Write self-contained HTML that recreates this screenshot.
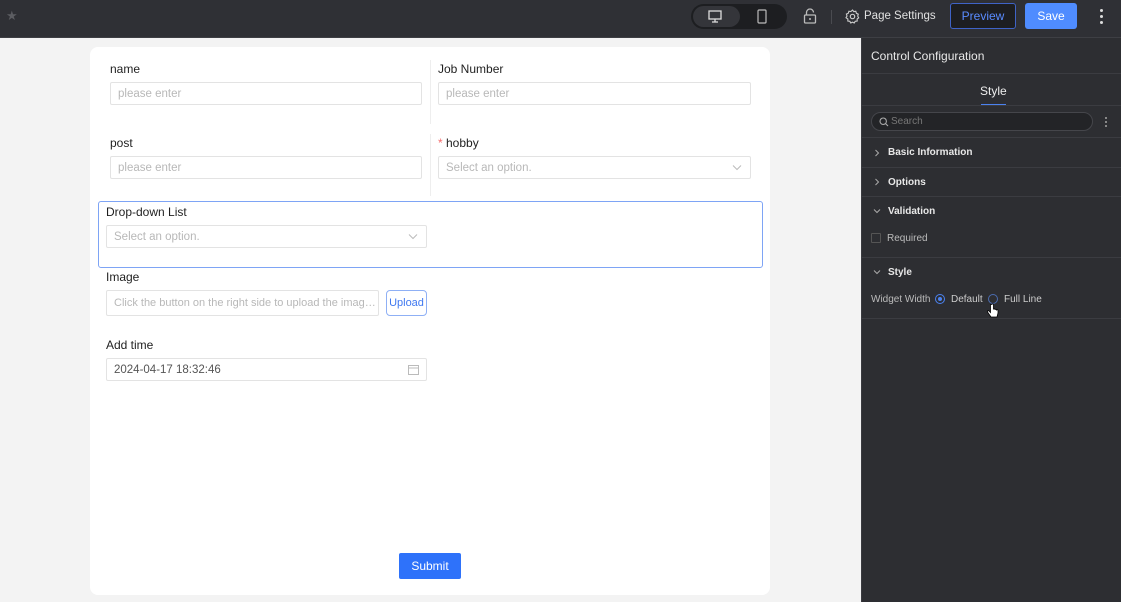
<!DOCTYPE html>
<html><head><meta charset="utf-8"><style>
*{box-sizing:border-box;margin:0;padding:0}
body{width:1121px;height:602px;overflow:hidden;background:#f3f3f3;font-family:"Liberation Sans",sans-serif;position:relative}
.a{position:absolute}
.top{left:0;top:0;width:1121px;height:38px;background:#2f3035;border-bottom:1px solid #3e3f44}
.card{left:90px;top:47px;width:680px;height:548px;background:#fff;border-radius:8px}
.lbl{font-size:12px;color:#1f1f1f}
.inp{height:23px;border:1px solid #e3e3e3;border-radius:2px;font-size:11.5px;color:#b8b8b8;padding-left:7px;padding-top:2px;line-height:19px;white-space:nowrap;overflow:hidden}
.panel{left:861px;top:38px;width:260px;height:564px;background:#2d2e32;border-left:1px solid #3a3b40}
.hl{height:1px;background:#3b3c41;left:861px;width:260px}
.sec{font-size:10px;font-weight:bold;color:#e8e8e8}
.dd{position:absolute;right:8px;top:7px}
</style></head><body>
<div class="a top"></div>
<div class="a" style="left:6px;top:8px;color:#5c5d62;font-size:13px">★</div>
<div class="a" style="left:691px;top:4px;width:96px;height:25px;background:#1d1e21;border-radius:13px"></div>
<div class="a" style="left:693px;top:6px;width:47px;height:21px;background:#34353a;border-radius:11px"></div>
<svg class="a" style="left:708px;top:10px" width="14" height="13" viewBox="0 0 14 13"><rect x="1" y="1" width="12" height="8" fill="none" stroke="#ddd" stroke-width="1.3"/><path d="M4 12h6M7 9v3" stroke="#ddd" stroke-width="1.3"/></svg>
<svg class="a" style="left:757px;top:9px" width="10" height="15" viewBox="0 0 10 15"><rect x="1" y="1" width="8" height="13" rx="1" fill="none" stroke="#bbb" stroke-width="1.2"/></svg>
<svg class="a" style="left:803px;top:8px" width="14" height="16" viewBox="0 0 14 16"><path d="M3.5 7V4.5a3.5 3.5 0 0 1 7 0" fill="none" stroke="#bbb" stroke-width="1.3"/><rect x="1.5" y="7" width="11" height="8" rx="1" fill="none" stroke="#bbb" stroke-width="1.3"/><circle cx="7" cy="11" r="1" fill="#bbb"/></svg>
<div class="a" style="left:831px;top:10px;width:1px;height:14px;background:#4a4b50"></div>
<svg class="a" style="left:845px;top:9px" width="15" height="15" viewBox="0 0 15 15"><circle cx="7.5" cy="7.5" r="2.2" fill="none" stroke="#ccc" stroke-width="1.2"/><path d="M7.5 1l1.3 1.6 2-.3.6 2 1.9.9-.6 1.9 1 1.7-1.6 1.2.1 2-2 .3-1 1.7-1.7-.9-1.7.9-1-1.7-2-.3.1-2L1 8.7l1-1.7-.6-1.9 1.9-.9.6-2 2 .3z" fill="none" stroke="#ccc" stroke-width="1.1"/></svg>
<div class="a" style="left:864px;top:10px;font-size:11.5px;color:#e0e0e0">Page Settings</div>
<div class="a" style="left:950px;top:3px;width:66px;height:26px;border:1px solid #3f63c7;border-radius:3px;background:#1d1e21;color:#5a8cff;font-size:12px;text-align:center;line-height:24px">Preview</div>
<div class="a" style="left:1025px;top:3px;width:52px;height:26px;border-radius:3px;background:#4f8cff;color:#fff;font-size:12px;text-align:center;line-height:26px">Save</div>
<div class="a" style="left:1100px;top:9px;width:3px;height:3px;background:#ddd;border-radius:50%;box-shadow:0 6px 0 #ddd,0 12px 0 #ddd"></div>

<div class="a card"></div>
<div class="a lbl" style="left:110px;top:62px">name</div>
<div class="a inp" style="left:110px;top:82px;width:312px">please enter</div>
<div class="a" style="left:430px;top:60px;width:1px;height:64px;background:#eee"></div>
<div class="a lbl" style="left:438px;top:62px">Job Number</div>
<div class="a inp" style="left:438px;top:82px;width:313px">please enter</div>
<div class="a lbl" style="left:110px;top:136px">post</div>
<div class="a inp" style="left:110px;top:156px;width:312px">please enter</div>
<div class="a" style="left:430px;top:134px;width:1px;height:62px;background:#eee"></div>
<div class="a lbl" style="left:438px;top:136px"><span style="color:#f56c6c">*</span> hobby</div>
<div class="a inp" style="left:438px;top:156px;width:313px">Select an option.<svg class="dd" width="10" height="7" viewBox="0 0 10 7"><path d="M1 1.5l4 4 4-4" fill="none" stroke="#bbb"/></svg></div>
<div class="a" style="left:98px;top:201px;width:665px;height:67px;border:1px solid #7ea4f5;border-radius:3px"></div>
<div class="a lbl" style="left:106px;top:205px">Drop-down List</div>
<div class="a inp" style="left:106px;top:225px;width:321px">Select an option.<svg class="dd" width="10" height="7" viewBox="0 0 10 7"><path d="M1 1.5l4 4 4-4" fill="none" stroke="#bbb"/></svg></div>
<div class="a lbl" style="left:106px;top:270px">Image</div>
<div class="a inp" style="left:106px;top:290px;width:273px;height:26px;padding-top:3px;line-height:19px;font-size:11px;text-overflow:ellipsis">Click the button on the right side to upload the image file</div>
<div class="a" style="left:386px;top:290px;width:41px;height:26px;border:1px solid #8fb0f5;border-radius:4px;color:#3f78f0;font-size:11px;text-align:center;line-height:24px">Upload</div>
<div class="a lbl" style="left:106px;top:338px">Add time</div>
<div class="a inp" style="left:106px;top:358px;width:321px;color:#555">2024-04-17 18:32:46<svg style="position:absolute;right:7px;top:5px" width="11" height="11" viewBox="0 0 11 11"><rect x=".5" y="1.5" width="10" height="9" fill="none" stroke="#bbb"/><path d="M.5 4h10" stroke="#bbb"/></svg></div>
<div class="a" style="left:399px;top:553px;width:62px;height:26px;background:#2e72fa;border-radius:2px;color:#fff;font-size:12px;text-align:center;line-height:26px">Submit</div>

<div class="a panel"></div>
<div class="a" style="left:871px;top:49px;font-size:12px;color:#e8e8e8">Control Configuration</div>
<div class="a hl" style="top:73px"></div>
<div class="a" style="left:980px;top:84px;font-size:12px;color:#eee">Style</div>
<div class="a" style="left:981px;top:104px;width:25px;height:2px;background:#4b82f0"></div>
<div class="a hl" style="top:105px"></div>
<div class="a" style="left:871px;top:112px;width:222px;height:19px;border:1px solid #45464b;border-radius:10px;background:#232427"></div>
<svg class="a" style="left:879px;top:117px" width="10" height="10" viewBox="0 0 10 10"><circle cx="4.2" cy="4.2" r="3.2" fill="none" stroke="#aaa" stroke-width="1.1"/><path d="M6.6 6.6L9 9" stroke="#aaa" stroke-width="1.1"/></svg>
<div class="a" style="left:891px;top:116px;font-size:10px;color:#777">Search</div>
<div class="a" style="left:1105px;top:117px;width:2px;height:2px;background:#888;box-shadow:0 4px 0 #888,0 8px 0 #888"></div>
<div class="a hl" style="top:137px"></div>
<svg class="a" style="left:874px;top:149px" width="6" height="8" viewBox="0 0 6 8"><path d="M1.5 1l3 3-3 3" fill="none" stroke="#aaa"/></svg><div class="a sec" style="left:888px;top:147px">Basic Information</div>
<div class="a hl" style="top:167px"></div>
<svg class="a" style="left:874px;top:178px" width="6" height="8" viewBox="0 0 6 8"><path d="M1.5 1l3 3-3 3" fill="none" stroke="#aaa"/></svg><div class="a sec" style="left:888px;top:177px">Options</div>
<div class="a hl" style="top:196px"></div>
<svg class="a" style="left:873px;top:208px" width="8" height="6" viewBox="0 0 8 6"><path d="M1 1.5l3 3 3-3" fill="none" stroke="#aaa"/></svg><div class="a sec" style="left:888px;top:206px">Validation</div>
<div class="a" style="left:871px;top:233px;width:10px;height:10px;border:1px solid #555;border-radius:1px"></div>
<div class="a" style="left:887px;top:233px;font-size:10px;color:#bbb">Required</div>
<div class="a hl" style="top:257px"></div>
<svg class="a" style="left:873px;top:269px" width="8" height="6" viewBox="0 0 8 6"><path d="M1 1.5l3 3 3-3" fill="none" stroke="#aaa"/></svg><div class="a sec" style="left:888px;top:267px">Style</div>
<div class="a" style="left:871px;top:294px;font-size:10px;color:#bbb">Widget Width</div>
<div class="a" style="left:935px;top:294px;width:10px;height:10px;border:1px solid #4b82f0;border-radius:50%"><div style="width:4px;height:4px;margin:2px;background:#4b82f0;border-radius:50%"></div></div>
<div class="a" style="left:951px;top:294px;font-size:10px;color:#ccc">Default</div>
<div class="a" style="left:988px;top:294px;width:10px;height:10px;border:1px solid #4b6cb0;border-radius:50%"></div>
<div class="a" style="left:1004px;top:294px;font-size:10px;color:#ccc">Full Line</div>
<svg class="a" style="left:987px;top:303px" width="12" height="16" viewBox="0 0 12 16"><path d="M3.5 1.5v8L2 8c-1-.8-2 .3-1.3 1.2L4 14h6l1-4V7.5c0-1-1.5-1-1.5 0V7c0-1-1.5-1-1.5 0V6.5c0-1-1.5-1-1.5 0V1.5c0-1-1.5-1-1.5 0z" fill="#fff" stroke="#000" stroke-width=".8"/></svg>
<div class="a hl" style="top:318px"></div>
</body></html>
